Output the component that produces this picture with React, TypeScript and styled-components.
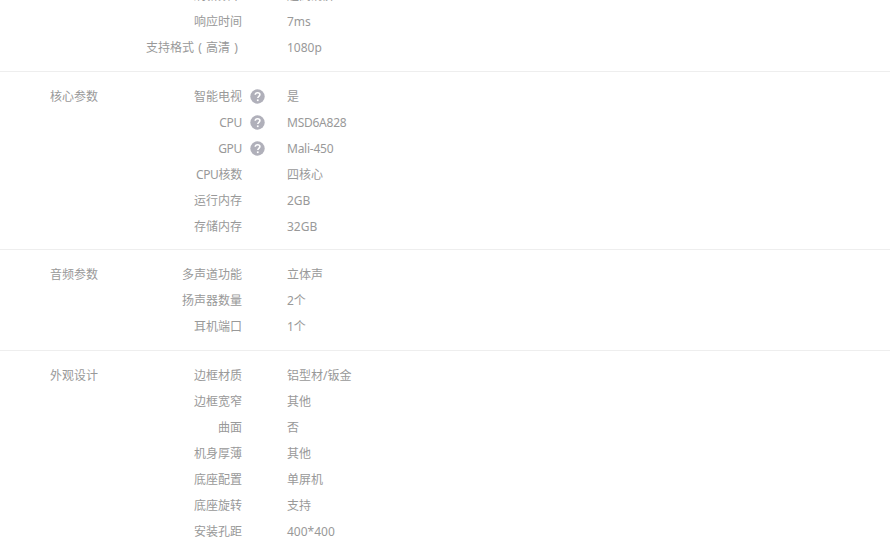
import React from 'react';
import styled, { createGlobalStyle } from 'styled-components';

const Global = createGlobalStyle`
  html, body { margin: 0; padding: 0; background: #fff; overflow: hidden; height: 100%; }
  body { font-family: "Noto Sans", "Noto Sans CJK SC", sans-serif; font-size: 12px; color: #999; }
`;

const Page = styled.div`
  width: 890px;
  height: 549px;
  overflow: hidden;
`;

const Sheet = styled.div`
  margin-top: -17px;
`;

const Section = styled.section<{ $top: number; $bottom: number; $last?: boolean }>`
  display: flex;
  padding: ${p => p.$top}px 0 ${p => p.$bottom}px;
  border-bottom: ${p => (p.$last ? 'none' : '1px solid #eee')};
`;

const SectionTitle = styled.div`
  width: 50px;
  margin-left: 50px;
  height: 26px;
  line-height: 26px;
  white-space: nowrap;
`;

const Rows = styled.div`
  display: flex;
  flex-direction: column;
`;

const Row = styled.div`
  display: flex;
  height: 26px;
  line-height: 26px;
  white-space: nowrap;
`;

const Label = styled.div<{ $tight?: boolean }>`
  width: 142px;
  text-align: right;
  letter-spacing: ${p => (p.$tight ? '-0.3px' : 'normal')};
`;

const Paren = styled.span`
  display: inline-block;
  width: 12px;
  text-align: center;
`;

const HelpSlot = styled.div`
  width: 45px;
  padding: 5px 0 0 8px;
  box-sizing: border-box;
  display: flex;
  align-items: flex-start;
`;

const Value = styled.div<{ $tight?: boolean }>`
  letter-spacing: ${p => (p.$tight ? '-0.25px' : 'normal')};
`;

const Help = () => (
  <svg width="15" height="15" viewBox="0 0 15 15" aria-hidden="true">
    <circle cx="7.5" cy="7.5" r="7.2" fill="#b0b0ba" />
    <path d="M5.2 5.8c.1-1.4 1-2.1 2.4-2.1 1.4 0 2.3.8 2.3 1.9 0 1-.6 1.4-1.2 1.9-.5.4-.8.7-.8 1.3v.3" fill="none" stroke="#fff" strokeWidth="1.6" />
    <rect x="6.9" y="10.4" width="1.7" height="1.7" fill="#fff" />
  </svg>
);

type Item = { key: string; label: React.ReactNode; value: string; help?: boolean; tight?: boolean };
const sections: { title: string; top: number; bottom: number; items: Item[] }[] = [
  {
    title: '',
    top: 0,
    bottom: 10,
    items: [
      { key: 'a', label: '刷新频率', value: '超高清屏' },
      { key: 'b', label: '响应时间', value: '7ms' },
      { key: 'c', label: <>支持格式<Paren>(</Paren>高清<Paren>)</Paren></>, value: '1080p' },
    ],
  },
  {
    title: '核心参数',
    top: 12,
    bottom: 9,
    items: [
      { key: 'd', label: '智能电视', value: '是', help: true },
      { key: 'e', label: 'CPU', value: 'MSD6A828', help: true, tight: true },
      { key: 'f', label: 'GPU', value: 'Mali-450', help: true, tight: true },
      { key: 'g', label: 'CPU核数', value: '四核心', tight: true },
      { key: 'h', label: '运行内存', value: '2GB' },
      { key: 'i', label: '存储内存', value: '32GB' },
    ],
  },
  {
    title: '音频参数',
    top: 12,
    bottom: 10,
    items: [
      { key: 'j', label: '多声道功能', value: '立体声' },
      { key: 'k', label: '扬声器数量', value: '2个' },
      { key: 'l', label: '耳机端口', value: '1个' },
    ],
  },
  {
    title: '外观设计',
    top: 12,
    bottom: 0,
    items: [
      { key: 'm', label: '边框材质', value: '铝型材/钣金' },
      { key: 'n', label: '边框宽窄', value: '其他' },
      { key: 'o', label: '曲面', value: '否' },
      { key: 'p', label: '机身厚薄', value: '其他' },
      { key: 'q', label: '底座配置', value: '单屏机' },
      { key: 'r', label: '底座旋转', value: '支持' },
      { key: 's', label: '安装孔距', value: '400*400' },
    ],
  },
];

export default function App() {
  return (
    <Page>
      <Global />
      <Sheet>
        {sections.map((s, i) => (
          <Section key={i} $top={s.top} $bottom={s.bottom} $last={i === sections.length - 1}>
            <SectionTitle>{s.title}</SectionTitle>
            <Rows>
              {s.items.map(it => (
                <Row key={it.key}>
                  <Label $tight={it.tight}>{it.label}</Label>
                  <HelpSlot>{it.help && <Help />}</HelpSlot>
                  <Value $tight={it.tight && !!it.help}>{it.value}</Value>
                </Row>
              ))}
            </Rows>
          </Section>
        ))}
      </Sheet>
    </Page>
  );
}
